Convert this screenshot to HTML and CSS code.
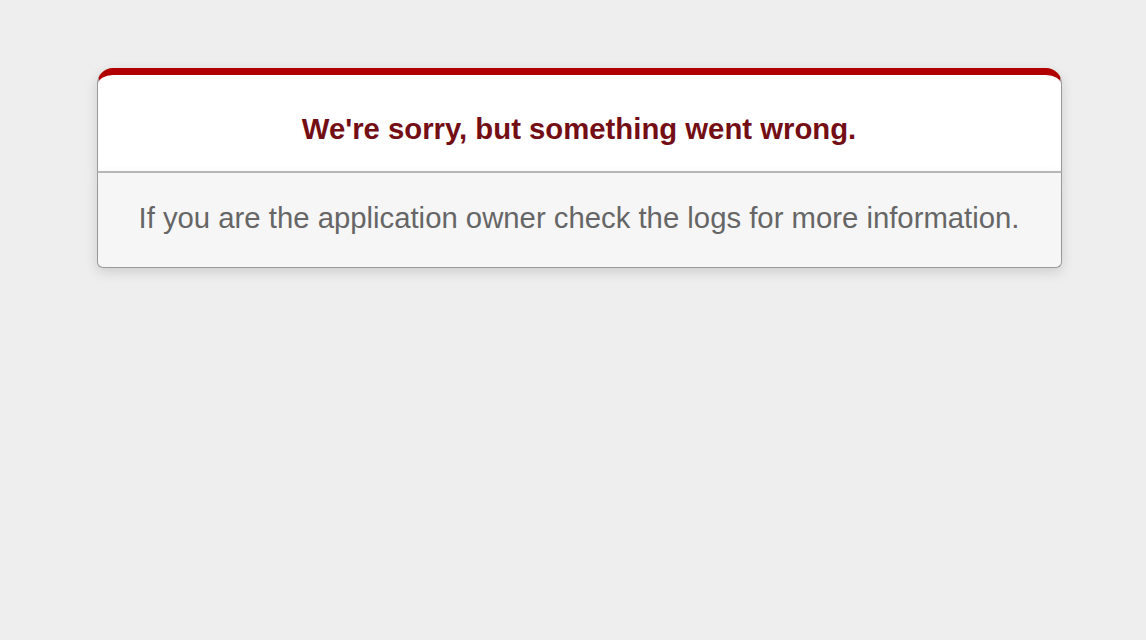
FILE: index.html
```html
<!DOCTYPE html>
<html>
<head>
<meta charset="utf-8">
<title>We're sorry, but something went wrong (500)</title>
<link rel="stylesheet" href="styles.css">
</head>
<body class="error-page">
  <div class="dialog">
    <div class="dialog-head">
      <h1 class="title">We're sorry, but something went wrong.</h1>
    </div>
    <p class="note">If you are the application owner check the logs for more information.</p>
  </div>
</body>
</html>
```

FILE: styles.css
```css
html, body {
  margin: 0;
  padding: 0;
}

.error-page {
  background-color: #EEEEEE;
  color: #2E2F30;
  text-align: center;
  font-family: "Liberation Sans", Arial, sans-serif;
  min-height: 640px;
  padding-left: 12px;
  box-sizing: border-box;
}

.dialog {
  width: 965px;
  margin: 68px auto 0;
}

.dialog-head {
  border: 1px solid #CCC;
  border-right-color: #999;
  border-left-color: #999;
  border-bottom: 2px solid #BBB;
  border-top: 7px solid #B00100;
  border-top-left-radius: 16px;
  border-top-right-radius: 16px;
  background-color: #FFFFFF;
  box-sizing: border-box;
  height: 105px;
  padding-top: 12px;
  display: flex;
  align-items: center;
  justify-content: center;
  box-shadow: 0 4px 12px rgba(50, 50, 50, 0.17);
}

.title {
  margin: 0;
  font-size: 29.3px;
  font-weight: bold;
  color: #730E15;
  line-height: 1.5;
}

.note {
  margin: 0;
  height: 95px;
  padding-bottom: 4px;
  box-sizing: border-box;
  display: flex;
  align-items: center;
  justify-content: center;
  background-color: #F6F6F6;
  border: 1px solid #999;
  border-top: none;
  border-bottom-left-radius: 6px;
  border-bottom-right-radius: 6px;
  color: #666666;
  font-size: 29.3px;
  box-shadow: 0 4px 12px rgba(50, 50, 50, 0.17);
}
```
